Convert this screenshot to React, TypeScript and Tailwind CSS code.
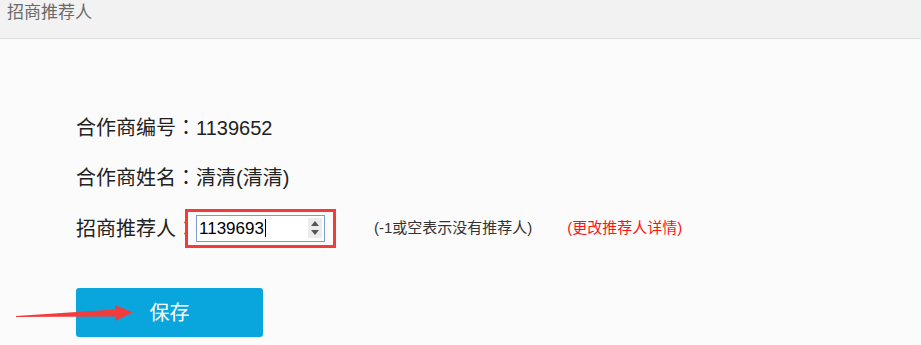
import React from 'react'

const FONT = "font-['Liberation_Sans','Noto_Sans_CJK_SC',sans-serif]"

// fullwidth colon, centred in its cell like the original font draws it
function Colon() {
  return <span className="font-['Noto_Sans_CJK_JP',sans-serif]">：</span>
}

// ── Number input mock (focused, with spinner) ───────────────────

function NumberBox({ value }: { value: string }) {
  return (
    <div className="relative">
      <div className="flex items-center w-[129px] h-[27px] border border-[#7b9bd3] bg-white pl-[2px]">
        <span className="text-[17px] leading-none text-black">{value}</span>
        <span className="w-px h-[18px] bg-black ml-[1px]" />
        <div className="ml-auto mr-[2px] w-[14px] h-[20px] bg-[#ececec] flex flex-col items-center justify-center gap-[4px]">
          <svg width="8" height="5" viewBox="0 0 8 5"><path d="M0 5 L4 0 L8 5 Z" fill="#555" /></svg>
          <svg width="8" height="5" viewBox="0 0 8 5"><path d="M0 0 L4 5 L8 0 Z" fill="#555" /></svg>
        </div>
      </div>
      {/* annotation frame */}
      <div className="absolute -left-[11px] -top-[6px] w-[151px] h-[39px] border-[3px] border-[#f23c3c] pointer-events-none" />
    </div>
  )
}

export default function App() {
  return (
    <div className={`relative w-full h-[345px] bg-[#fbfbfb] overflow-hidden ${FONT}`}>
      <div className="h-[39px] bg-[#f2f2f2] border-b border-[#dcdcdc] pl-[7px]">
        <span className="text-[17px] leading-[26px] text-[#6a6a6a]">招商推荐人</span>
      </div>

      <div className="pl-[76px] text-[20px] text-[#222]">
        <div className="mt-[73px] h-[30px] flex items-center">
          <span>合作商编号<Colon />1139652</span>
        </div>
        <div className="mt-[20px] h-[30px] flex items-center">
          <span>合作商姓名<Colon />清清(清清)</span>
        </div>
        <div className="mt-[21px] h-[30px] flex items-center">
          <span>招商推荐人<Colon /></span>
          <NumberBox value="1139693" />
          <span className="ml-[49px] text-[15px] text-[#333]">(-1或空表示没有推荐人)</span>
          <span className="ml-[35px] text-[15px] text-[#ff1414]">(更改推荐人详情)</span>
        </div>

        <button className="mt-[45px] w-[187px] h-[49px] rounded-[3px] bg-[#09a6de] text-white text-[20px] flex items-center justify-center">
          保存
        </button>
      </div>

      {/* annotation arrow */}
      <svg className="absolute left-0 top-0 pointer-events-none" width="921" height="345">
        <polygon points="16,316 115,309.5 115,305 133,312.5 115,321 116,316.5 16,317" fill="#f03c3c" />
      </svg>
    </div>
  )
}
